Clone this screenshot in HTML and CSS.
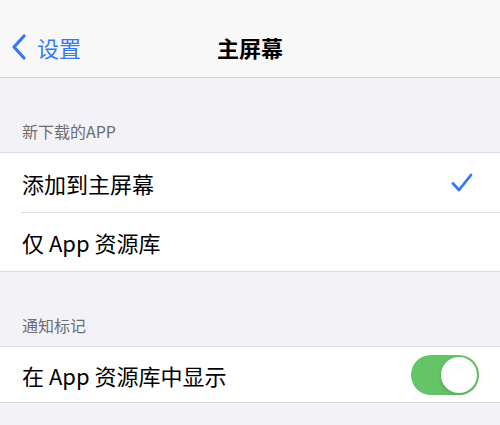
FILE: index.html
```html
<!DOCTYPE html>
<html lang="zh-CN">
<head>
<meta charset="utf-8">
<link rel="stylesheet" href="styles.css">
</head>
<body>
<header class="nav">
  <div class="back">
    <svg class="chev" width="16" height="26" viewBox="0 0 16 26"><path d="M13 2 L3 13 L13 24" fill="none" stroke="#3478f6" stroke-width="3.2" stroke-linecap="round" stroke-linejoin="round"/></svg>
    <span>设置</span>
  </div>
  <div class="title">主屏幕</div>
  <div></div>
</header>
<div class="section-head first">新下载的APP</div>
<ul class="group">
  <li class="row">
    <span>添加到主屏幕</span>
    <svg class="check" width="22" height="22" viewBox="0 0 22 22"><path d="M2 11.5 L8 18 L20 3" fill="none" stroke="#3478f6" stroke-width="2.8" stroke-linecap="round" stroke-linejoin="round"/></svg>
  </li>
  <li class="row"><span>仅 App 资源库</span></li>
</ul>
<div class="section-head">通知标记</div>
<ul class="group">
  <li class="row short">
    <span>在 App 资源库中显示</span>
    <div class="toggle"><div class="knob"></div></div>
  </li>
</ul>
</body>
</html>
```
FILE: styles.css
```css
* { box-sizing: border-box; }
body {
  margin: 0;
  background: #f2f2f7;
  font-family: "Noto Sans CJK SC", "Noto Sans", sans-serif;
  color: #000;
}
.nav {
  height: 78px;
  background: #f8f8f9;
  border-bottom: 1px solid #d6d6da;
  display: grid;
  grid-template-columns: 1fr auto 1fr;
  align-items: center;
  padding-top: 17px;
}
.back {
  display: flex;
  align-items: center;
  gap: 10px;
  padding-left: 11px;
  color: #3478f6;
  font-size: 22px;
}
.title {
  font-size: 22px;
  font-weight: 700;
}
.section-head {
  height: 74px;
  display: flex;
  align-items: flex-end;
  padding: 0 0 9px 22px;
  font-size: 16px;
  color: #6d6d72;
}
.group {
  list-style: none;
  margin: 0;
  padding: 0;
  background: #fff;
  border-top: 1px solid #dcdce0;
  border-bottom: 1px solid #dcdce0;
}
.row {
  height: 59px;
  display: flex;
  align-items: center;
  justify-content: space-between;
  padding: 0 22px 0 22px;
  font-size: 22px;
  position: relative;
}
.row + .row { border-top: 1px solid #dfdfe3; margin-left: 21px; padding-left: 1px; }
.row.short { height: 55px; padding-right: 21px; }
.check { margin-right: 5px; }
.toggle {
  width: 68px;
  height: 40px;
  border-radius: 20px;
  background: #65c466;
  padding: 2px;
  display: flex;
  justify-content: flex-end;
}
.knob {
  width: 36px;
  height: 36px;
  border-radius: 50%;
  background: #fff;
  box-shadow: 0 2px 4px rgba(0,0,0,0.15);
}
```
